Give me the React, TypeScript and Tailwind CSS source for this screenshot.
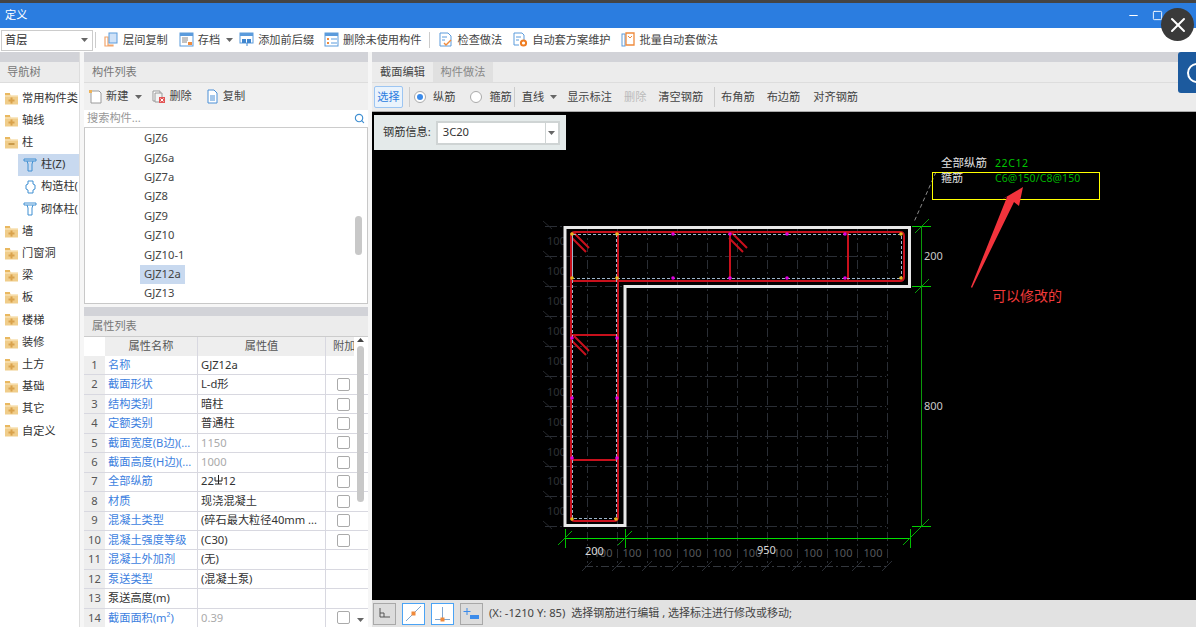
import React from 'react';
import { ChevronDown, Search, Minus, Square, X } from 'lucide-react';

const FONT = '"Noto Sans", "Noto Sans CJK SC", sans-serif';

const Folder = ({ open }: { open?: boolean }) => (
  <svg width="15" height="13" viewBox="0 0 15 13" className="shrink-0">
    <path d="M1 2h5l1 1.5h7v9H1z" fill="#f0cd8a" />
    <rect x="1" y="1" width="5" height="2" fill="#e9b860" />
    <rect x="1" y="3.5" width="13" height="1" fill="#fbe9c4" />
    {open ? (
      <rect x="4.5" y="7" width="6" height="2" fill="#c99a4a" />
    ) : (
      <path d="M6.5 5.5h2v2h2v2h-2v2h-2v-2h-2v-2h2z" fill="#d9a24c" />
    )}
  </svg>
);

const ToolIcon = ({ kind }: { kind: string }) => (
  <svg width="15" height="15" viewBox="0 0 15 15" className="shrink-0">
    {kind === 'copy' && (
      <>
        <path d="M1 5h3v8h5v1H1z" fill="none" stroke="#f2a56c" strokeWidth="1.2" />
        <rect x="5" y="1" width="8" height="10" fill="#cfe2f8" stroke="#5b9bdc" />
      </>
    )}
    {kind === 'save' && (
      <>
        <rect x="1" y="1" width="13" height="13" fill="#fff" stroke="#5b9bdc" />
        <rect x="1" y="1" width="13" height="3" fill="#5b9bdc" />
        <path d="M3 6h6M3 8h6M3 10h5" stroke="#888" />
        <rect x="9" y="10" width="4" height="3" fill="#ef8a3c" />
      </>
    )}
    {kind === 'prefix' && (
      <>
        <rect x="1" y="1" width="13" height="10" fill="#fff" stroke="#5b9bdc" />
        <rect x="1" y="1" width="13" height="3" fill="#5b9bdc" />
        <rect x="3" y="7" width="4" height="4" fill="#3f86cf" />
        <rect x="8" y="7" width="4" height="4" fill="#3f86cf" />
        <path d="M8 11v3" stroke="#3f86cf" />
      </>
    )}
    {kind === 'unused' && (
      <>
        <rect x="1" y="1" width="13" height="13" fill="#fff" stroke="#5b9bdc" />
        <rect x="1" y="1" width="13" height="3" fill="#5b9bdc" />
        <path d="M3 6l2 2M5 6l-2 2M3 10l2 2M5 10l-2 2" stroke="#ef8a3c" />
        <path d="M7 7h6M7 11h6" stroke="#5b9bdc" />
      </>
    )}
    {kind === 'check' && (
      <>
        <path d="M2 1h8l3 3v10H2z" fill="#fff" stroke="#5b9bdc" />
        <path d="M4 5h5M4 8h3" stroke="#5b9bdc" />
        <path d="M6 11l2 2 5-5" fill="none" stroke="#ef8a3c" strokeWidth="1.4" />
      </>
    )}
    {kind === 'auto' && (
      <>
        <path d="M1 1h8l2 2v5M1 1v12h5" fill="#fff" stroke="#5b9bdc" />
        <path d="M3 5h5M3 8h3" stroke="#5b9bdc" />
        <circle cx="10.5" cy="11" r="2.6" fill="none" stroke="#ef7d22" strokeWidth="2" />
      </>
    )}
    {kind === 'batch' && (
      <>
        <rect x="1" y="2" width="3" height="12" fill="#fff" stroke="#5b9bdc" />
        <path d="M5 1h8v12H5z" fill="#fff" stroke="#ef8a3c" strokeWidth="1.3" />
        <path d="M7 4l2 2 2-2" fill="none" stroke="#ef8a3c" />
      </>
    )}
    {kind === 'new' && (
      <>
        <path d="M3 2h8l2 2v10H3z" fill="#fff" stroke="#9a9a9a" />
        <rect x="1" y="1" width="3" height="3" fill="#efb45a" />
      </>
    )}
    {kind === 'del' && (
      <>
        <path d="M2 2h7v10H2z" fill="#fff" stroke="#999" />
        <path d="M4 4h7v9H4z" fill="#f4f4f4" stroke="#999" />
        <rect x="8" y="8" width="6" height="6" fill="#e25555" />
        <path d="M9.5 9.5l3 3M12.5 9.5l-3 3" stroke="#fff" />
      </>
    )}
    {kind === 'dup' && (
      <>
        <path d="M3 1h6l3 3v10H3z" fill="#fff" stroke="#4a8fd6" />
        <path d="M5 7h5M5 9h5M5 11h5" stroke="#4a8fd6" />
      </>
    )}
  </svg>
);

const Caret = () => (
  <svg width="7" height="4" viewBox="0 0 7 4" className="shrink-0">
    <path d="M0 0h7L3.5 4z" fill="#666" />
  </svg>
);

const navItems = [
  { label: '常用构件类', level: 0 },
  { label: '轴线', level: 0 },
  { label: '柱', level: 0, open: true },
  { label: '柱(Z)', level: 1, icon: 'column', active: true },
  { label: '构造柱(', level: 1, icon: 'gz' },
  { label: '砌体柱(', level: 1, icon: 'qtz' },
  { label: '墙', level: 0 },
  { label: '门窗洞', level: 0 },
  { label: '梁', level: 0 },
  { label: '板', level: 0 },
  { label: '楼梯', level: 0 },
  { label: '装修', level: 0 },
  { label: '土方', level: 0 },
  { label: '基础', level: 0 },
  { label: '其它', level: 0 },
  { label: '自定义', level: 0 },
];

const components = ['GJZ6', 'GJZ6a', 'GJZ7a', 'GJZ8', 'GJZ9', 'GJZ10', 'GJZ10-1', 'GJZ12a', 'GJZ13'];

const props = [
  { name: '名称', value: 'GJZ12a' },
  { name: '截面形状', value: 'L-d形', box: true },
  { name: '结构类别', value: '暗柱', box: true },
  { name: '定额类别', value: '普通柱', box: true },
  { name: '截面宽度(B边)(...', value: '1150', box: true, muted: true },
  { name: '截面高度(H边)(...', value: '1000', box: true, muted: true },
  { name: '全部纵筋', value: 'rebar', box: true },
  { name: '材质', value: '现浇混凝土', box: true },
  { name: '混凝土类型', value: '(碎石最大粒径40mm ...', box: true },
  { name: '混凝土强度等级', value: '(C30)', box: true },
  { name: '混凝土外加剂', value: '(无)' },
  { name: '泵送类型', value: '(混凝土泵)' },
  { name: '泵送高度(m)', value: '', plain: true },
  { name: '截面面积(m²)', value: '0.39', box: true, muted: true },
];

const gridX = [587, 617, 647, 677, 707, 737, 767, 797, 827, 857, 887];
const gridY = [226, 256, 286, 316, 346, 376, 406, 436, 466, 496, 526];
const leftNums = [241, 271, 301, 331, 361, 392, 422, 452, 481, 511];
const bottomNums = [603, 632, 662, 692, 722, 752, 783, 813, 843, 873];
const pink: [number, number][] = [
  [673, 234], [787, 234], [673, 278], [787, 278], [730, 234], [730, 278], [845, 234], [845, 278],
  [572, 338], [617, 338], [572, 398], [617, 398], [572, 458], [617, 458],
];
const yellow: [number, number][] = [
  [572, 234], [617, 234], [572, 278], [617, 278], [901, 234], [901, 278], [572, 519], [616, 519],
];

const Tick = ({ x, y, color }: { x: number; y: number; color: string }) => (
  <path d={`M${x - 7} ${y + 7}L${x + 7} ${y - 7}`} stroke={color} />
);

const Drawing = () => (
  <svg viewBox="372 112 824 488" className="block h-full w-full" fontFamily={FONT}>
    {/* grid */}
    <g shapeRendering="crispEdges">
      {gridX.map((x) => (
        <path key={x} d={`M${x}.5 226V566`} stroke="#2a2e35" strokeDasharray="9 3 2 3" />
      ))}
      {gridY.map((y) => (
        <path key={y} d={`M545 ${y}.5H886`} stroke="#2a2e35" strokeDasharray="12 3 2 3" />
      ))}
      <path d="M585 566.5H888" stroke="#33373d" strokeDasharray="8 3 2 3" />
    </g>
    {gridY.map((y) => (
      <path key={y} d={`M543 ${y - 5}L552 ${y + 3}`} stroke="#24272c" />
    ))}
    {gridX.map((x) => (
      <path key={x} d={`M${x - 5} ${566 + 5}L${x + 5} ${566 - 5}`} stroke="#2a2e35" />
    ))}
    {leftNums.map((y) => (
      <text key={y} x="547" y={y + 4} fill="#2e3136" fontSize="11">
        100
      </text>
    ))}
    {bottomNums.map((x) => (
      <text key={x} x={x} y="557" fill="#55585c" fontSize="11" textAnchor="middle">
        100
      </text>
    ))}

    {/* concrete outline */}
    <path d="M565 227.5H909.5V286.5H625V525.5H565Z" fill="none" stroke="#e8e8e8" strokeWidth="3" />

    {/* stirrups */}
    <g fill="none" stroke="#c8101c" strokeWidth="2">
      <path d="M575 232H900Q904 232 904 236V277Q904 281 900 281H571V236Q571 232 575 232Z" />
      <path d="M571 236V517Q571 521 575 521H614Q618 521 618 517V232" />
      <path d="M730 232V281M848 232V281M571 335H618M571 460H618" />
      <path d="M574 233L589 248M572 238L586 252" />
      <path d="M732 233L747 248M729 238L743 252" />
      <path d="M574 336L589 351M572 341L586 355" />
    </g>
    {/* rebar lines */}
    <g fill="none" stroke="#9fb6cc" strokeWidth="1" strokeDasharray="3 2" shapeRendering="crispEdges">
      <path d="M572.5 234.5H901.5V278.5H572.5ZM572.5 234.5V518.5H616.5V234.5" />
    </g>
    {pink.map(([x, y], i) => (
      <circle key={i} cx={x} cy={y} r="1.8" fill="#e000e0" />
    ))}
    {yellow.map(([x, y], i) => (
      <circle key={i} cx={x} cy={y} r="1.8" fill="#e8b91e" />
    ))}

    {/* dimensions */}
    <g shapeRendering="crispEdges" fill="none">
      <path d="M921.5 226V526" stroke="#0a9a0a" />
      <path d="M565 538.5H910" stroke="#00e000" strokeWidth="1" />
      <path d="M565 529V548M625 529V548M910 529V548" stroke="#00c000" />
      <path d="M912 226.5H931M912 286.5H931M912 526.5H931" stroke="#00d000" />
    </g>
    <Tick x={922} y={226} color="#0a9a0a" />
    <Tick x={922} y={286} color="#0a9a0a" />
    <Tick x={922} y={526} color="#0a9a0a" />
    <Tick x={565} y={538} color="#00b000" />
    <Tick x={625} y={538} color="#00b000" />
    <Tick x={910} y={538} color="#00b000" />
    <text x="924" y="260" fill="#c8c8c8" fontSize="11">200</text>
    <text x="924" y="410" fill="#c8c8c8" fontSize="11">800</text>
    <text x="585" y="555" fill="#d8d8d8" fontSize="11">200</text>
    <text x="757" y="554" fill="#d8d8d8" fontSize="11">950</text>

    {/* leader and annotation */}
    <path d="M936 172L914 222" stroke="#8a8a8a" strokeDasharray="4 3" fill="none" />
    <text x="941" y="167" fill="#e0e0e0" fontSize="11.5">全部纵筋</text>
    <text x="995" y="167" fill="#00c400" fontSize="10.5" letterSpacing="0.6">22C12</text>
    <rect x="932.5" y="172.5" width="167" height="27" fill="none" stroke="#ffff00" shapeRendering="crispEdges" />
    <text x="941" y="182" fill="#e0e0e0" fontSize="11">箍筋</text>
    <text x="995" y="182" fill="#00b400" fontSize="10.5" letterSpacing="0.1">C6@150/C8@150</text>
    <path d="M1023 187L1019 206L1014 202L972 288L971 287L1007 197L1001 200Z" fill="#f2333c" />
    <text x="992" y="301" fill="#f03a3a" fontSize="14">可以修改的</text>
  </svg>
);

const StatusBtn = ({ on, children }: { on?: boolean; children: React.ReactNode }) => (
  <div
    className={`flex h-[22px] w-[23px] items-center justify-center border ${
      on ? 'border-[#4aa3f5] bg-white' : 'border-[#a8a8a8] bg-[#dcdcdc]'
    }`}
  >
    {children}
  </div>
);

const TopBtn = ({ icon, label, caret, className }: { icon: string; label: string; caret?: boolean; className: string }) => (
  <div className={`flex items-center gap-[4px] ${className}`}>
    <ToolIcon kind={icon} />
    <span>{label}</span>
    {caret && <span className="ml-[2px]"><Caret /></span>}
  </div>
);

export default function App() {
  return (
    <div
      className="relative flex h-[627px] w-[1196px] flex-col overflow-hidden bg-white text-[11.2px] text-[#444]"
      style={{ fontFamily: FONT }}
    >
      {/* window frame */}
      <div className="h-[3px] shrink-0 bg-[#444]" />
      <div className="flex h-[25px] shrink-0 items-center justify-between bg-[#2b7de0] pl-[5px] pr-[33px] text-white">
        <span>定义</span>
        <div className="flex items-center gap-[12px]">
          <Minus size={13} strokeWidth={2} />
          <Square size={11} strokeWidth={2} />
        </div>
      </div>

      {/* main toolbar */}
      <div className="flex h-[24px] shrink-0 items-center bg-white pl-[1px]">
        <div className="flex h-[21px] w-[92px] items-center justify-between border border-[#ccc] pl-[3px] pr-[4px] text-[#333]">
          首层
          <Caret />
        </div>
        <div className="ml-[2px] h-[16px] w-px bg-[#ccc]" />
        <TopBtn icon="copy" label="层间复制" className="ml-[8px]" />
        <TopBtn icon="save" label="存档" caret className="ml-[11px]" />
        <TopBtn icon="prefix" label="添加前后缀" className="ml-[6px]" />
        <TopBtn icon="unused" label="删除未使用构件" className="ml-[10px]" />
        <div className="ml-[8px] h-[16px] w-px bg-[#ccc]" />
        <TopBtn icon="check" label="检查做法" className="ml-[8px]" />
        <TopBtn icon="auto" label="自动套方案维护" className="ml-[11px]" />
        <TopBtn icon="batch" label="批量自动套做法" className="ml-[10px]" />
      </div>

      <div className="flex min-h-0 flex-1 bg-[#f6f6f6]">
        {/* navigation tree */}
        <div className="w-[80px] shrink-0 border-r border-[#ddd] bg-white">
          <div className="h-[10px] bg-[#d2d3d8]" />
          <div className="flex h-[21px] items-center border-b border-[#ddd] bg-[#ececec] pl-[7px] text-[#777]">导航树</div>
          <div className="mt-[4px] flex flex-col overflow-hidden">
            {navItems.map((item) => (
              <div
                key={item.label}
                className={`flex h-[22.2px] items-center gap-[3px] whitespace-nowrap ${
                  item.level ? `ml-[18px] pl-[5px] ${item.active ? 'bg-[#c8d9ef]' : ''}` : 'pl-[4px]'
                }`}
              >
                {item.level ? (
                  <svg width="15" height="14" viewBox="0 0 15 14" fill="none" stroke="#3f8fd2" className="shrink-0">
                    {item.icon === 'gz' ? (
                      <path d="M5 1h5v3l2 1v4l-2 1v3H5v-3L3 9V5l2-1z" />
                    ) : (
                      <path d="M1 1h12v2H1zM4 3l1 3v7h4V6l1-3" />
                    )}
                  </svg>
                ) : (
                  <Folder open={item.open} />
                )}
                <span className="text-[#333]">{item.label}</span>
              </div>
            ))}
          </div>
        </div>

        {/* component list + properties */}
        <div className="ml-[4px] flex w-[284px] shrink-0 flex-col">
          <div className="h-[10px] shrink-0 bg-[#d2d3d8]" />
          <div className="flex h-[21px] shrink-0 items-center border-b border-[#ddd] bg-[#ececec] pl-[8px] text-[#777]">构件列表</div>
          <div className="flex h-[27px] shrink-0 items-center bg-[#f0f0f0] pl-[4px]">
            <ToolIcon kind="new" />
            <span className="ml-[3px]">新建</span>
            <span className="ml-[7px]"><Caret /></span>
            <span className="ml-[9px]"><ToolIcon kind="del" /></span>
            <span className="ml-[3px]">删除</span>
            <span className="ml-[13px]"><ToolIcon kind="dup" /></span>
            <span className="ml-[3px]">复制</span>
          </div>
          <div className="flex h-[18px] shrink-0 items-center justify-between border-b border-[#ccc] bg-white pl-[3px] pr-[3px] text-[#999]">
            搜索构件...
            <Search size={11} className="text-[#3f8fd2]" strokeWidth={2.5} />
          </div>
          <div className="relative h-[176px] shrink-0 overflow-hidden border-x border-b border-[#c8c8c8] bg-white pl-[55px] pt-[1px]">
            {components.map((c) => (
              <div key={c} className="flex h-[19.4px] items-center">
                <span className={`flex h-[19px] items-center px-[4px] text-[#444] ${c === 'GJZ12a' ? 'bg-[#c8d9ef]' : ''}`}>{c}</span>
              </div>
            ))}
            <div className="absolute right-[5px] top-[88px] h-[39px] w-[7px] rounded bg-[#c8c8c8]" />
          </div>
          <div className="h-[3px] shrink-0" />
          <div className="h-[9px] shrink-0 bg-[#d2d3d8]" />
          <div className="flex h-[21px] shrink-0 items-center border-b border-[#ccc] bg-[#ececec] pl-[8px] text-[#777]">属性列表</div>
          <div className="relative min-h-0 flex-1 overflow-hidden bg-white">
            <div className="grid h-[19px] grid-cols-[21px_93px_128px_28px] text-center text-[#555]">
              <div className="bg-white" />
              <div className="flex items-center justify-center border-r border-[#d8d8e0] bg-[#eee]">属性名称</div>
              <div className="flex items-center justify-center border-r border-[#d8d8e0] bg-[#eee]">属性值</div>
              <div className="flex items-center overflow-hidden whitespace-nowrap bg-[#eee] pl-[7px]">附加</div>
            </div>
            {props.map((p, i) => (
              <div key={p.name} className="grid h-[19.45px] grid-cols-[21px_93px_128px_28px] border-b border-[#d8d8e0] whitespace-nowrap">
                <div className="flex items-center justify-center bg-[#eee] text-[#555]">{i + 1}</div>
                <div className={`flex items-center overflow-hidden border-r border-[#d8d8e0] pl-[3px] ${p.plain ? 'text-[#333]' : 'text-[#3d7fe0]'}`}>{p.name}</div>
                <div className={`flex items-center overflow-hidden border-r border-[#d8d8e0] pl-[3px] ${p.muted ? 'text-[#aaa]' : 'text-[#333]'}`}>
                  {p.value === 'rebar' ? (
                    <>
                      22
                      <svg width="9" height="10" viewBox="0 0 9 10" className="mb-[3px]" fill="none" stroke="#222">
                        <path d="M1 2v4h7V2M4.5 0v9M1 9h7" />
                      </svg>
                      12
                    </>
                  ) : (
                    p.value
                  )}
                </div>
                <div className="flex items-center pl-[11px]">
                  {p.box && <div className="h-[13px] w-[13px] rounded-[2px] border border-[#aaa] bg-white" />}
                </div>
              </div>
            ))}
            {/* scrollbar */}
            <div className="absolute right-[3px] top-[1px] flex h-[284px] w-[10px] flex-col items-center justify-between">
              <svg width="7" height="4" viewBox="0 0 7 4"><path d="M3.5 0L7 4H0z" fill="#444" /></svg>
              <div className="absolute top-[8px] h-[156px] w-[7px] rounded bg-[#c8c8c8]" />
              <Caret />
            </div>
          </div>
        </div>

        {/* section editor */}
        <div className="ml-[4px] flex min-w-0 flex-1 flex-col">
          <div className="h-[10px] shrink-0 bg-[#d2d3d8]" />
          <div className="flex h-[21px] shrink-0 items-stretch border-b border-[#ddd] bg-[#ececec]">
            <div className="flex w-[61px] items-center justify-center text-[#444]">截面编辑</div>
            <div className="flex w-[60px] items-center justify-center bg-[#e0e0e0] text-[#888]">构件做法</div>
          </div>
          <div className="flex h-[29px] shrink-0 items-center border-b border-[#aaa] bg-[#ececec] pl-[2px]">
            <div className="flex h-[22px] w-[29px] items-center justify-center rounded-[2px] border border-[#9cc5f2] bg-[#eaf3fc] text-[#2b7de0]">选择</div>
            <div className="ml-[6px] h-[20px] w-px bg-[#ccc]" />
            <div className="ml-[4px] flex h-[12px] w-[12px] items-center justify-center rounded-full border border-[#aaa] bg-white">
              <div className="h-[6px] w-[6px] rounded-full bg-[#3b8bea]" />
            </div>
            <span className="ml-[7px]">纵筋</span>
            <div className="ml-[15px] h-[12px] w-[12px] rounded-full border border-[#aaa] bg-white" />
            <span className="ml-[7px]">箍筋</span>
            <div className="ml-[2px] h-[20px] w-px bg-[#ccc]" />
            <span className="ml-[7px]">直线</span>
            <span className="ml-[6px]"><Caret /></span>
            <span className="ml-[10px]">显示标注</span>
            <span className="ml-[12px] text-[#bbb]">删除</span>
            <span className="ml-[12px]">清空钢筋</span>
            <div className="ml-[11px] h-[20px] w-px bg-[#ccc]" />
            <span className="ml-[6px]">布角筋</span>
            <span className="ml-[12px]">布边筋</span>
            <span className="ml-[13px]">对齐钢筋</span>
          </div>
          <div className="relative min-h-0 flex-1 bg-black">
            <Drawing />
            <div className="absolute left-[2px] top-[3px] flex h-[35px] w-[192px] items-center bg-[#e4eaea] pl-[9px] text-[#333]">
              钢筋信息:
              <div className="ml-[5px] flex h-[24px] w-[124px] items-center border-2 border-[#cfd4d4] bg-white">
                <span className="flex-1 pl-[5px]">3C20</span>
                <div className="flex h-full w-[13px] items-center justify-center border-l border-[#cfd4d4]"><Caret /></div>
              </div>
            </div>
          </div>
          <div className="flex h-[27px] shrink-0 items-center gap-[6px] bg-[#e2e2e2] pl-[1px]">
            <StatusBtn>
              <svg width="15" height="14" viewBox="0 0 15 14" fill="none" stroke="#555"><path d="M3 1v9h10M3 6h4v4" /></svg>
            </StatusBtn>
            <StatusBtn on>
              <svg width="17" height="17" viewBox="0 0 17 17"><path d="M1 16L16 1" stroke="#7fa6d0" /><rect x="6.5" y="6.5" width="4" height="4" fill="#ef8a3c" /></svg>
            </StatusBtn>
            <StatusBtn on>
              <svg width="17" height="17" viewBox="0 0 17 17"><path d="M8.5 2v13M1 14.5h15" stroke="#7fa6d0" /><rect x="6.5" y="12.5" width="4" height="4" fill="#ef8a3c" /></svg>
            </StatusBtn>
            <StatusBtn>
              <svg width="17" height="17" viewBox="0 0 17 17"><path d="M4 3v7M0.5 6.5h7" stroke="#3b8bea" /><rect x="7" y="10" width="9" height="4" fill="#3b8bea" /></svg>
            </StatusBtn>
            <span className="whitespace-pre text-[#444]">(X: -1210 Y: 85)</span>
            <span className="whitespace-pre text-[11px] text-[#444]">选择钢筋进行编辑 , 选择标注进行修改或移动;</span>
          </div>
        </div>
      </div>

      {/* overlay controls */}
      <div className="absolute left-[1161px] top-[8px] flex h-[33px] w-[33px] items-center justify-center rounded-full bg-[#3a3a3a] text-white">
        <X size={24} strokeWidth={2} />
      </div>
      <div className="absolute left-[1178px] top-[52px] h-[41px] w-[18px] overflow-hidden rounded-l-[3px] bg-[#1c5a9e]">
        <div className="absolute left-[9px] top-[11px] h-[20px] w-[20px] rounded-full border-2 border-white" />
      </div>
    </div>
  );
}
